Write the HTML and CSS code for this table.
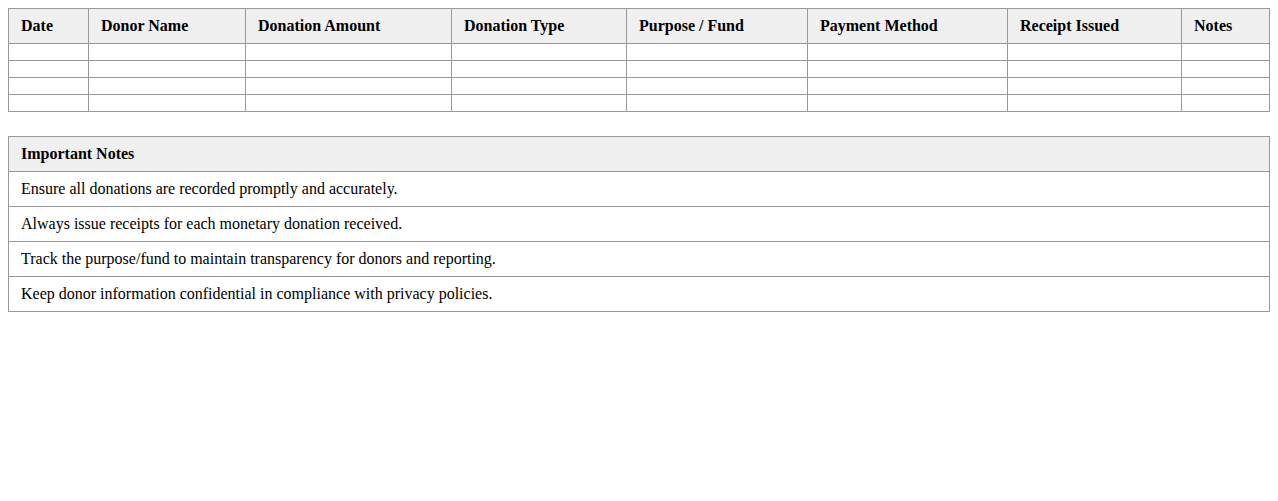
FILE: index.html
```html
<!DOCTYPE html>
<html>
<head>
<meta charset="utf-8">
<link rel="stylesheet" href="styles.css">
</head>
<body>
<table class="log">
<colgroup>
<col class="c1"><col class="c2"><col class="c3"><col class="c4"><col class="c5"><col class="c6"><col class="c7"><col class="c8">
</colgroup>
<thead>
<tr><th>Date</th><th>Donor Name</th><th>Donation Amount</th><th>Donation Type</th><th>Purpose / Fund</th><th>Payment Method</th><th>Receipt Issued</th><th>Notes</th></tr>
</thead>
<tbody>
<tr><td></td><td></td><td></td><td></td><td></td><td></td><td></td><td></td></tr>
<tr><td></td><td></td><td></td><td></td><td></td><td></td><td></td><td></td></tr>
<tr><td></td><td></td><td></td><td></td><td></td><td></td><td></td><td></td></tr>
<tr><td></td><td></td><td></td><td></td><td></td><td></td><td></td><td></td></tr>
</tbody>
</table>
<table class="notes">
<thead><tr><th>Important Notes</th></tr></thead>
<tbody>
<tr><td>Ensure all donations are recorded promptly and accurately.</td></tr>
<tr><td>Always issue receipts for each monetary donation received.</td></tr>
<tr><td>Track the purpose/fund to maintain transparency for donors and reporting.</td></tr>
<tr><td>Keep donor information confidential in compliance with privacy policies.</td></tr>
</tbody>
</table>
</body>
</html>
```
FILE: styles.css
```css
body {
  margin: 8px;
  font-family: "Liberation Serif", "Times New Roman", serif;
  font-size: 16px;
  color: #000;
  background: #fff;
}
table {
  width: 100%;
  border-collapse: collapse;
}
.log {
  table-layout: fixed;
  margin-bottom: 24px;
}
th, td {
  border: 1px solid #999;
  padding: 8px 12px;
  text-align: left;
  line-height: 18px;
}
td:empty {
  line-height: 0;
}
th {
  background: #f0f0f0;
  font-weight: bold;
}
.c1 { width: 80px; }
.c2 { width: 157px; }
.c3 { width: 206px; }
.c4 { width: 175px; }
.c5 { width: 181px; }
.c6 { width: 200px; }
.c7 { width: 174px; }
.c8 { width: 88px; }
```
